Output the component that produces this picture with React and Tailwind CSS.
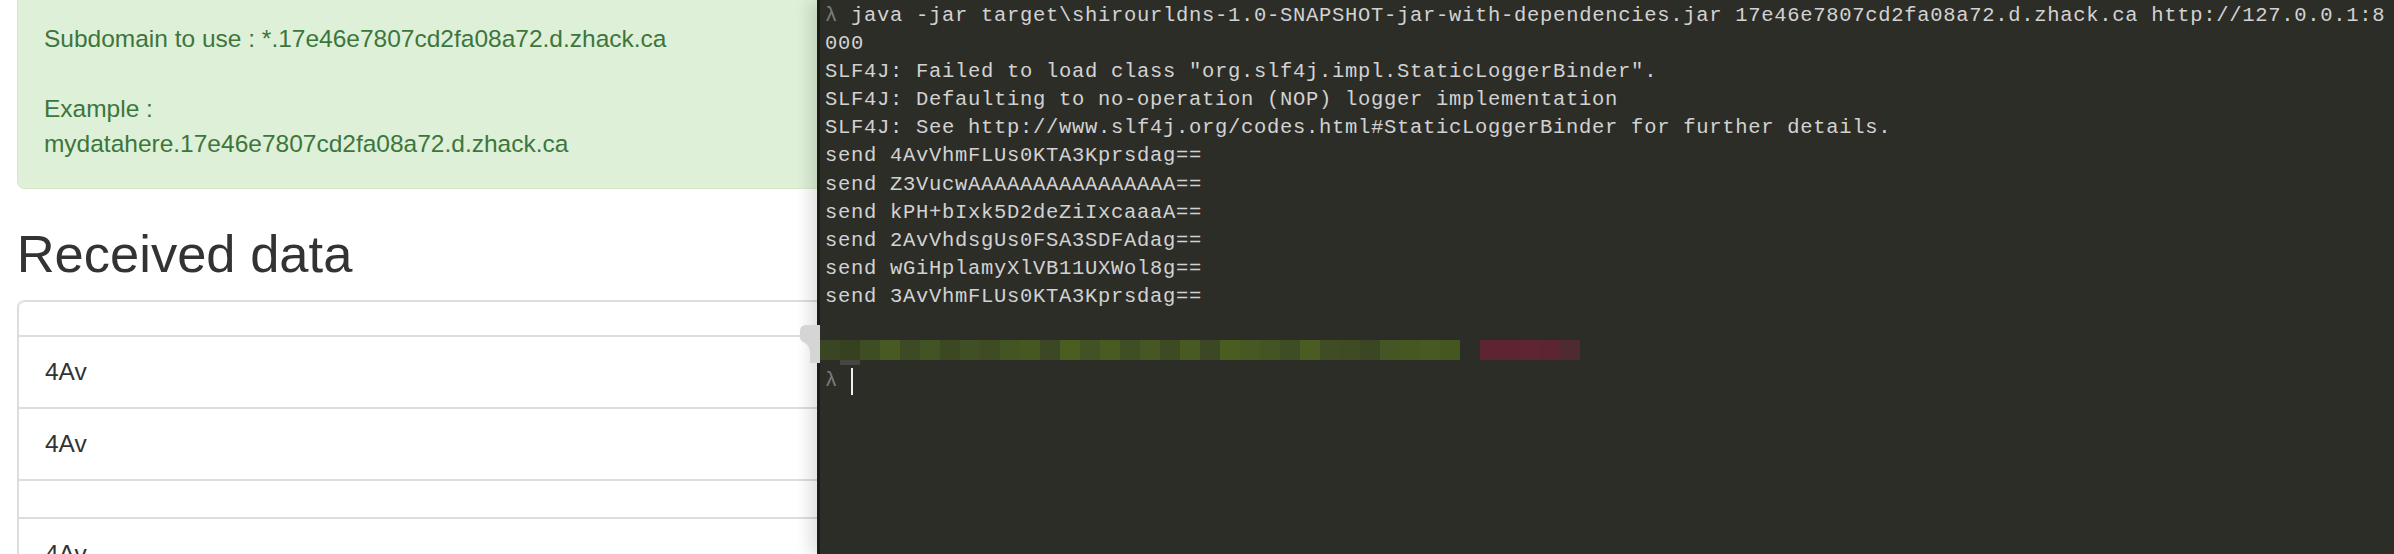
import React from "react";

const termLines = [
  { dim: "λ ", text: "java -jar target\\shirourldns-1.0-SNAPSHOT-jar-with-dependencies.jar 17e46e7807cd2fa08a72.d.zhack.ca http://127.0.0.1:8" },
  { text: "000" },
  { text: 'SLF4J: Failed to load class "org.slf4j.impl.StaticLoggerBinder".' },
  { text: "SLF4J: Defaulting to no-operation (NOP) logger implementation" },
  { text: "SLF4J: See http://www.slf4j.org/codes.html#StaticLoggerBinder for further details." },
  { text: "send 4AvVhmFLUs0KTA3Kprsdag==" },
  { text: "send Z3VucwAAAAAAAAAAAAAAAA==" },
  { text: "send kPH+bIxk5D2deZiIxcaaaA==" },
  { text: "send 2AvVhdsgUs0FSA3SDFAdag==" },
  { text: "send wGiHplamyXlVB11UXWol8g==" },
  { text: "send 3AvVhmFLUs0KTA3Kprsdag==" },
];

// pixelated redaction blocks (20px each)
const greens = [
  "#3a4623", "#36421f", "#3f4d22", "#475a21", "#3d4a24", "#435424", "#3b4822", "#405024",
  "#3e4b23", "#445524", "#46581f", "#3c4824", "#4a5e1f", "#425224", "#485b21", "#3f4e23",
  "#465723", "#3e4b22", "#475a22", "#3b4823", "#4a5d20", "#475922", "#445423", "#3f4d24",
  "#4a5c21", "#3f4c24", "#3f4c23", "#3b4723", "#435623", "#465822", "#475a21", "#44571f",
];
const reds = ["#5e2431", "#5e2431", "#602533", "#5d2432", "#4f2a31"];

const rows = [
  { h: "h-[35px]", text: "" },
  { h: "h-[72px]", text: "4Av" },
  { h: "h-[72px]", text: "4Av" },
  { h: "h-[38px]", text: "" },
  { h: "h-[72px]", text: "4Av" },
];

export default function App() {
  return (
    <div className="relative flex h-[554px] w-[2394px] overflow-hidden bg-white">
      {/* browser page */}
      <div className="w-[817px] shrink-0 overflow-hidden">
        <div className="-mt-[6px] w-[1100px] pl-[16.7px] font-['Liberation_Sans',Arial,sans-serif] text-[24.5px] leading-[35px] text-[#333]">
          <div className="mb-[36px] rounded-[7px] border-[1.75px] border-[#d6e9c6] bg-[#dff0d8] p-[26.25px] text-[#3c763d]">
            <div>Subdomain to use : *.17e46e7807cd2fa08a72.d.zhack.ca</div>
            <div className="h-[35px]" />
            <div>Example :</div>
            <div>mydatahere.17e46e7807cd2fa08a72.d.zhack.ca</div>
          </div>
          <h2 className="mb-[17.5px] text-[52.5px] leading-[57.75px] font-medium">Received data</h2>
          <div className="rounded-t-[7px] border-l-2 border-[#ddd]">
            {rows.map((r, i) => (
              <div key={i} className={`${r.h} border-t-2 border-[#ddd] px-[26.25px] pt-[17.5px] ${i === 0 ? "rounded-tl-[7px]" : ""}`}>
                {r.text}
              </div>
            ))}
          </div>
        </div>
      </div>

      {/* terminal */}
      <div className="relative z-10 w-[1577px] shrink-0 border-l-[3px] border-[#1c1d19] bg-[#2d2d28] pt-[2px] pl-[5px] font-['Liberation_Mono','DejaVu_Sans_Mono',monospace] text-[20.5px] leading-[28.1px] tracking-[0.7px] text-[#d2d2d2] shadow-[-8px_0_14px_rgba(0,0,0,0.12)]">
        {termLines.map((l, i) => (
          <div key={i} className="h-[28.1px] whitespace-pre">
            {l.dim && <span className="text-[#7c7c7c]">{l.dim}</span>}
            {l.text}
          </div>
        ))}
        <div className="h-[28.1px]" />
        <div className="-ml-[5px] flex h-[28.1px] flex-col pt-[1px]">
          <div className="flex h-[20px]">
            {greens.map((c, i) => (
              <div key={i} className="h-full w-[20px]" style={{ backgroundColor: c }} />
            ))}
            <div className="w-[20px]" />
            {reds.map((c, i) => (
              <div key={i} className="h-full w-[20px]" style={{ backgroundColor: c }} />
            ))}
          </div>
          <div className="ml-[20px] h-[5px] w-[20px] bg-[#454542]" />
        </div>
        <div className="flex h-[28.1px] items-center whitespace-pre">
          <span className="text-[#7c7c7c]">λ </span>
          <span className="h-[27px] w-[2px] bg-[#f0f0f0]" />
        </div>
      </div>

      {/* drag handle artifact */}
      <svg className="absolute left-[798px] top-[325px] z-20" width="22" height="38" viewBox="0 0 22 38">
        <path d="M22 0 L8 0 Q2 0 2 6 L2 12 Q2 16 7 18 Q12 21 12 28 L12 38 L22 38 Z" fill="#d5d5d5" />
      </svg>
    </div>
  );
}
